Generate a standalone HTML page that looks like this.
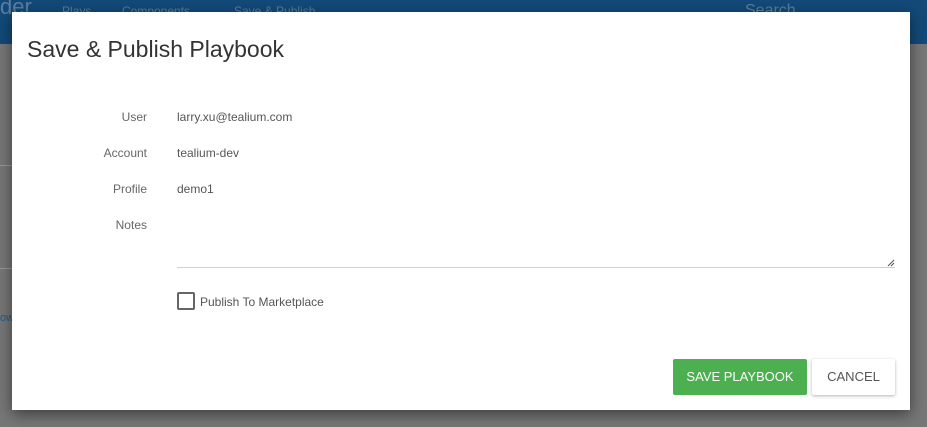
<!DOCTYPE html>
<html><head><meta charset="utf-8"><style>
*{margin:0;padding:0;box-sizing:border-box}
body{width:927px;height:427px;overflow:hidden;background:#777;font-family:"Liberation Sans",sans-serif;position:relative}
.bar{position:absolute;left:0;top:0;width:927px;height:44px;background:#134a79}
.bar span{position:absolute;top:4px;color:#5a7fa0;font-size:12px}
.hl{position:absolute;left:0;width:12px;height:1px;background:#999}
.dlg{position:absolute;left:12px;top:12px;width:898px;height:398px;background:#fff;box-shadow:0 4px 14px rgba(0,0,0,.5)}
h1{position:absolute;left:15px;top:24px;font-size:23px;font-weight:normal;color:#333}
.lab{position:absolute;width:135px;text-align:right;font-size:12px;color:#666}
.val{position:absolute;left:165px;font-size:12px;color:#555}
.ta{position:absolute;left:165px;top:255px;width:718px;height:1px;background:#d0d0d0}
.cb{position:absolute;left:165px;top:280px;width:18px;height:18px;border:2px solid #666;border-radius:2px}
.btn{position:absolute;top:347px;height:36px;font-size:13px;line-height:36px;text-align:center;border-radius:2px}
</style></head><body>
<div class="bar"><span style="left:0;font-size:22px;top:-6px">der</span><span style="left:62px">Plays</span><span style="left:122px">Components</span><span style="left:234px">Save &amp; Publish</span><span style="left:745px;font-size:16px;top:2px">Search</span></div>
<div class="hl" style="top:165px"></div><div class="hl" style="top:268px"></div>
<div style="position:absolute;left:0;top:312px;font-size:11px;color:#1e5b8f">ow</div>
<div class="dlg">
<h1>Save &amp; Publish Playbook</h1>
<div class="lab" style="top:98px">User</div><div class="val" style="top:98px">larry.xu@tealium.com</div>
<div class="lab" style="top:134px">Account</div><div class="val" style="top:134px">tealium-dev</div>
<div class="lab" style="top:170px">Profile</div><div class="val" style="top:170px">demo1</div>
<div class="lab" style="top:206px">Notes</div>
<div class="ta"></div>
<svg style="position:absolute;left:875px;top:247px" width="8" height="8"><path d="M1 7L7 1M4 7L7 4" stroke="#555" stroke-width="1"/></svg>
<div class="cb"></div>
<div class="val" style="left:188px;top:283px;font-size:12px">Publish To Marketplace</div>
<div class="btn" style="left:661px;width:134px;background:#4caf50;color:#fff">SAVE PLAYBOOK</div>
<div class="btn" style="left:800px;width:83px;background:#fff;color:#555;box-shadow:0 1px 3px rgba(0,0,0,.3)">CANCEL</div>
</div>
</body></html>
